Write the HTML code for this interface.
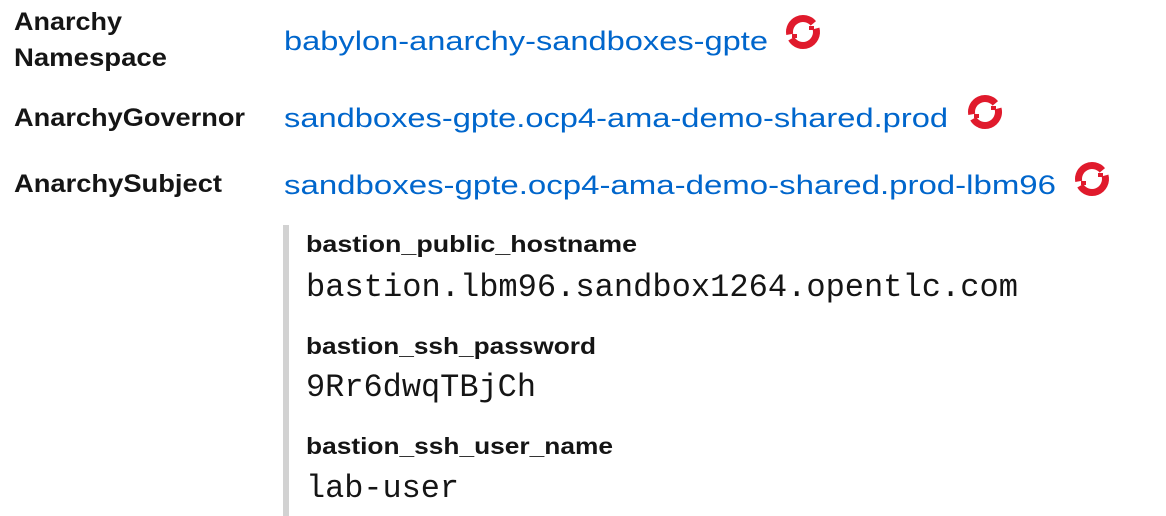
<!DOCTYPE html>
<html><head><meta charset="utf-8"><style>
html,body{margin:0;padding:0;background:#fff;width:1166px;height:516px;overflow:hidden}
svg{display:block}
.l{font-family:"Liberation Sans",sans-serif;font-weight:bold;fill:#151515}
.a{font-family:"Liberation Sans",sans-serif;fill:#0066cc;font-size:27px}
.m{font-family:"Liberation Mono",monospace;fill:#151515;font-size:32px}
</style></head><body>
<svg width="1166" height="516" viewBox="0 0 1166 516" xmlns="http://www.w3.org/2000/svg">
<defs>
<g id="ic">
<path d="M-13.29,2.34 A13.5,13.5 0 0 1 10.34,-8.68" fill="none" stroke="#e01a2c" stroke-width="7"/>
<path d="M13.04,-3.49 A13.5,13.5 0 0 1 -11.69,6.75" fill="none" stroke="#e01a2c" stroke-width="7"/>
<rect x="6" y="-6" width="5" height="4" fill="#e01a2c"/>
<rect x="-11" y="2" width="5" height="4" fill="#e01a2c"/>
</g>
</defs>
<g class="l" font-size="25">
<text x="14" y="30" textLength="108" lengthAdjust="spacingAndGlyphs">Anarchy</text>
<text x="14" y="66" textLength="153" lengthAdjust="spacingAndGlyphs">Namespace</text>
<text x="14" y="126" textLength="231" lengthAdjust="spacingAndGlyphs">AnarchyGovernor</text>
<text x="14" y="192" textLength="208" lengthAdjust="spacingAndGlyphs">AnarchySubject</text>
</g>
<text class="a" x="284" y="50" textLength="484" lengthAdjust="spacingAndGlyphs">babylon-anarchy-sandboxes-gpte</text>
<text class="a" x="284" y="127" textLength="664" lengthAdjust="spacingAndGlyphs">sandboxes-gpte.ocp4-ama-demo-shared.prod</text>
<text class="a" x="284" y="194" textLength="772" lengthAdjust="spacingAndGlyphs">sandboxes-gpte.ocp4-ama-demo-shared.prod-lbm96</text>
<use href="#ic" x="803" y="32"/>
<use href="#ic" x="985" y="112"/>
<use href="#ic" x="1092" y="179"/>
<rect x="283" y="225" width="6" height="291" fill="#d2d2d2"/>
<g class="l" font-size="23">
<text x="306" y="252" textLength="331" lengthAdjust="spacingAndGlyphs">bastion_public_hostname</text>
<text x="306" y="354" textLength="290" lengthAdjust="spacingAndGlyphs">bastion_ssh_password</text>
<text x="306" y="454" textLength="307" lengthAdjust="spacingAndGlyphs">bastion_ssh_user_name</text>
</g>
<text class="m" x="306" y="296" textLength="712" lengthAdjust="spacingAndGlyphs">bastion.lbm96.sandbox1264.opentlc.com</text>
<text class="m" x="306" y="396" textLength="230" lengthAdjust="spacingAndGlyphs">9Rr6dwqTBjCh</text>
<text class="m" x="306" y="497" textLength="153" lengthAdjust="spacingAndGlyphs">lab-user</text>
</svg>
</body></html>
